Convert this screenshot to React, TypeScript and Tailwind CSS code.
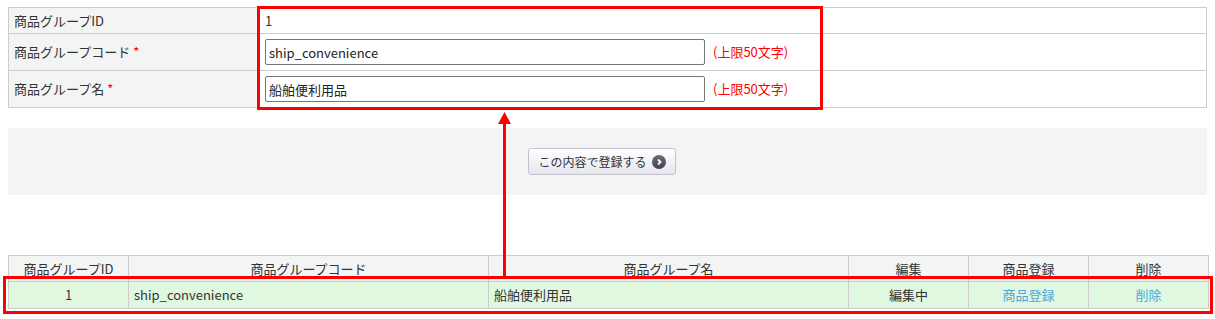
import React from "react";

const font = { fontFamily: '"Noto Sans CJK JP", "Noto Sans", sans-serif' };

const App: React.FC = () => {
  return (
    <div className="relative w-[1215px] h-[319px] bg-white text-[13px] text-[#333]" style={font}>
      <div className="px-2 pt-[7px]">
        {/* FORM TABLE */}
        <table className="w-full border-collapse">
          <tbody>
            <tr className="h-[26px]">
              <th className="w-[249px] border border-[#cccccc] bg-[#f3f4f4] px-[5px] text-left font-normal">商品グループID</th>
              <td className="border border-[#cccccc] px-[7px]">1</td>
            </tr>
            <tr className="h-[37px]">
              <th className="border border-[#cccccc] bg-[#f3f4f4] px-[5px] text-left font-normal">
                商品グループコード <span className="text-[#ff0000]">*</span>
              </th>
              <td className="border border-[#cccccc] px-[7px]">
                <div className="flex items-center gap-2">
                  <input
                    readOnly
                    value="ship_convenience"
                    className="w-[440px] h-[26px] border border-[#767676] rounded-[2px] px-[3px] text-[13px] text-[#222] outline-none"
                    style={font}
                  />
                  <span className="text-[#ff0000]">(上限50文字)</span>
                </div>
              </td>
            </tr>
            <tr className="h-[37px]">
              <th className="border border-[#cccccc] bg-[#f3f4f4] px-[5px] text-left font-normal">
                商品グループ名 <span className="text-[#ff0000]">*</span>
              </th>
              <td className="border border-[#cccccc] px-[7px]">
                <div className="flex items-center gap-2">
                  <input
                    readOnly
                    value="船舶便利用品"
                    className="w-[440px] h-[26px] border border-[#767676] rounded-[2px] px-[3px] text-[13px] text-[#222] outline-none"
                    style={font}
                  />
                  <span className="text-[#ff0000]">(上限50文字)</span>
                </div>
              </td>
            </tr>
          </tbody>
        </table>

        {/* SUBMIT PANEL */}
        <div className="mt-5 h-[67px] bg-[#f4f4f4] flex items-center justify-center">
          <button className="mr-[11px] flex items-center gap-[5px] h-[27px] px-[9px] border border-[#c3c3cf] rounded-[3px] bg-gradient-to-b from-white to-[#e6e6ec] text-[12px] text-[#2f3040]">
            この内容で登録する
            <span className="w-[14px] h-[14px] rounded-full bg-gradient-to-b from-[#6a6a78] to-[#44444f] flex items-center justify-center">
              <svg width="8" height="8" viewBox="0 0 8 8">
                <path d="M3 1.5 L5.5 4 L3 6.5" stroke="white" strokeWidth="1.8" fill="none" />
              </svg>
            </span>
          </button>
        </div>

        {/* LIST TABLE */}
        <table className="mt-[60px] w-full border-collapse table-fixed">
          <thead>
            <tr className="h-[26px] bg-[#f3f4f4]">
              <th className="w-[120px] border border-[#cccccc] font-normal">商品グループID</th>
              <th className="w-[360px] border border-[#cccccc] font-normal">商品グループコード</th>
              <th className="w-[360px] border border-[#cccccc] font-normal">商品グループ名</th>
              <th className="w-[120px] border border-[#cccccc] font-normal">編集</th>
              <th className="w-[120px] border border-[#cccccc] font-normal">商品登録</th>
              <th className="w-[120px] border border-[#cccccc] font-normal">削除</th>
            </tr>
          </thead>
          <tbody>
            <tr className="h-[27px] bg-[#e0f8e0]">
              <td className="border border-[#cccccc] text-center">1</td>
              <td className="border border-[#cccccc] px-[5px]">ship_convenience</td>
              <td className="border border-[#cccccc] px-[5px]">船舶便利用品</td>
              <td className="border border-[#cccccc] text-center">編集中</td>
              <td className="border border-[#cccccc] text-center text-[#4da6d9]">商品登録</td>
              <td className="border border-[#cccccc] text-center text-[#4da6d9]">削除</td>
            </tr>
          </tbody>
        </table>
      </div>

      {/* ANNOTATIONS */}
      <div className="absolute left-[257px] top-[6px] w-[566px] h-[104px] border-[3px] border-[#ff0000]" />
      <div className="absolute left-[3px] top-[276px] w-[1210px] h-[38px] border-[3px] border-[#ff0000]" />
      <div className="absolute left-[503px] top-[122px] w-[3px] h-[155px] bg-[#ff0000]" />
      <svg className="absolute left-[498px] top-[112px]" width="13" height="12" viewBox="0 0 13 12">
        <path d="M6.5 0 L13 12 L0 12 Z" fill="#ff0000" />
      </svg>
    </div>
  );
};

export default App;
